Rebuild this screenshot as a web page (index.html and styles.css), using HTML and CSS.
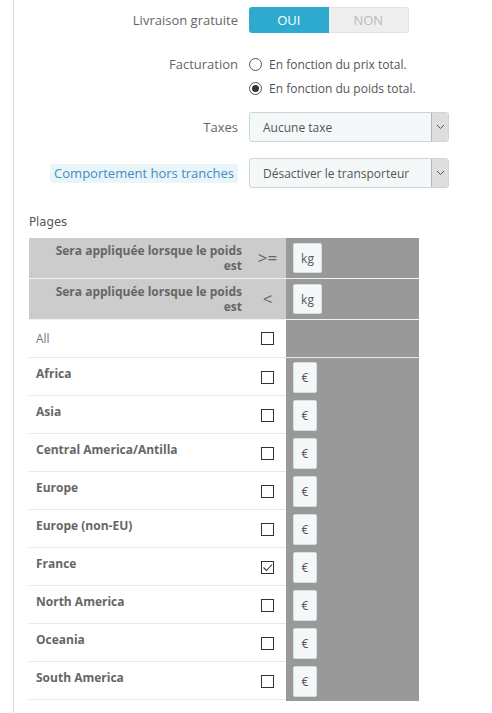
FILE: index.html
```html
<!DOCTYPE html>
<html lang="fr">
<head>
<meta charset="utf-8">
<title>Transporteur</title>
<link rel="stylesheet" href="styles.css">
</head>
<body>
<div class="panel">
  <div class="form-row row-toggle">
    <label class="form-label">Livraison gratuite</label>
    <div class="switch">
      <span class="switch-on">OUI</span>
      <span class="switch-off">NON</span>
    </div>
  </div>

  <div class="form-row row-radio">
    <label class="form-label">Facturation</label>
    <div class="radios">
      <div class="radio-line"><span class="radio"></span><span>En fonction du prix total.</span></div>
      <div class="radio-line"><span class="radio radio-checked"></span><span>En fonction du poids total.</span></div>
    </div>
  </div>

  <div class="form-row row-taxes">
    <label class="form-label">Taxes</label>
    <div class="select">
      <span class="select-text">Aucune taxe</span>
      <span class="select-arrow"><svg width="9" height="6" viewBox="0 0 9 6"><polyline points="1,1 4.5,4.5 8,1" fill="none" stroke="#555" stroke-width="1"/></svg></span>
    </div>
  </div>

  <div class="form-row row-behavior">
    <label class="form-label"><span class="label-tip">Comportement hors tranches</span></label>
    <div class="select">
      <span class="select-text">Désactiver le transporteur</span>
      <span class="select-arrow"><svg width="9" height="6" viewBox="0 0 9 6"><polyline points="1,1 4.5,4.5 8,1" fill="none" stroke="#555" stroke-width="1"/></svg></span>
    </div>
  </div>

  <h3 class="section-title">Plages</h3>

  <div class="ranges">
    <div class="trow thead">
      <div class="c-label">Sera appliquée lorsque le poids est</div>
      <div class="c-op">&gt;=</div>
      <div class="c-val"><span class="unit unit-kg">kg</span></div>
    </div>
    <div class="trow thead">
      <div class="c-label">Sera appliquée lorsque le poids est</div>
      <div class="c-op">&lt;</div>
      <div class="c-val"><span class="unit unit-kg">kg</span></div>
    </div>
    <div class="trow tall">
      <div class="c-name c-all">All</div>
      <div class="c-check"><span class="cb"></span></div>
      <div class="c-val"></div>
    </div>
    <div class="trow">
      <div class="c-name">Africa</div>
      <div class="c-check"><span class="cb"></span></div>
      <div class="c-val"><span class="unit">€</span></div>
    </div>
    <div class="trow">
      <div class="c-name">Asia</div>
      <div class="c-check"><span class="cb"></span></div>
      <div class="c-val"><span class="unit">€</span></div>
    </div>
    <div class="trow">
      <div class="c-name">Central America/Antilla</div>
      <div class="c-check"><span class="cb"></span></div>
      <div class="c-val"><span class="unit">€</span></div>
    </div>
    <div class="trow">
      <div class="c-name">Europe</div>
      <div class="c-check"><span class="cb"></span></div>
      <div class="c-val"><span class="unit">€</span></div>
    </div>
    <div class="trow">
      <div class="c-name">Europe (non-EU)</div>
      <div class="c-check"><span class="cb"></span></div>
      <div class="c-val"><span class="unit">€</span></div>
    </div>
    <div class="trow">
      <div class="c-name">France</div>
      <div class="c-check"><span class="cb cb-checked"><svg width="11" height="11" viewBox="0 0 11 11"><polyline points="1.5,5.5 4.5,8.5 10,2.5" fill="none" stroke="#333" stroke-width="1.1"/></svg></span></div>
      <div class="c-val"><span class="unit">€</span></div>
    </div>
    <div class="trow">
      <div class="c-name">North America</div>
      <div class="c-check"><span class="cb"></span></div>
      <div class="c-val"><span class="unit">€</span></div>
    </div>
    <div class="trow">
      <div class="c-name">Oceania</div>
      <div class="c-check"><span class="cb"></span></div>
      <div class="c-val"><span class="unit">€</span></div>
    </div>
    <div class="trow">
      <div class="c-name">South America</div>
      <div class="c-check"><span class="cb"></span></div>
      <div class="c-val"><span class="unit">€</span></div>
    </div>
  </div>
</div>
</body>
</html>
```

FILE: styles.css
```css
* { box-sizing: border-box; }
html, body { margin: 0; padding: 0; background: #fff; }
body {
  font-family: "Open Sans", "Liberation Sans", sans-serif;
  font-size: 12px;
  color: #555;
}
.panel {
  margin-left: 13px;
  border-left: 1px solid #dcdcdc;
  padding: 7px 0 14px 15px;
  min-height: 713px;
}
.form-row {
  display: grid;
  grid-template-columns: 209px 240px;
  column-gap: 11px;
  align-items: center;
}
.form-label {
  text-align: right;
  color: #666;
  font-size: 13px;
}
.row-radio { align-items: start; margin-top: 19px; }
.row-radio .form-label { line-height: 24px; }
.row-taxes { margin-top: 12px; }
.row-behavior { margin-top: 16px; }

.switch {
  display: flex;
  width: 160px;
  height: 26px;
  border-radius: 3px;
  overflow: hidden;
  font-size: 13px;
}
.switch-on, .switch-off {
  flex: 1;
  display: flex;
  align-items: center;
  justify-content: center;
}
.switch-on { background: #2eaacf; color: #fff; }
.switch-off { background: #eeeeee; color: #bbb; border: 1px solid #e3e3e3; border-left: none; border-radius: 0 3px 3px 0; }

.radios { display: flex; flex-direction: column; }
.radio-line {
  display: flex;
  align-items: center;
  height: 24px;
  color: #555;
  font-size: 12px;
}
.radio {
  width: 13px;
  height: 13px;
  border: 1px solid #555;
  border-radius: 50%;
  margin-right: 7px;
  display: flex;
  align-items: center;
  justify-content: center;
  background: #fff;
}
.radio-checked::after {
  content: "";
  width: 7px;
  height: 7px;
  border-radius: 50%;
  background: #333;
}

.select {
  display: flex;
  width: 200px;
  height: 30px;
  border: 1px solid #c9d6dc;
  border-radius: 3px;
  background: #f5f8f9;
  overflow: hidden;
}
.select-text {
  flex: 1;
  display: flex;
  align-items: center;
  padding-left: 13px;
  font-size: 12px;
  color: #555;
}
.select-arrow {
  width: 17px;
  display: flex;
  align-items: center;
  justify-content: center;
  background: #dedede;
  border-left: 1px solid #b5b5b5;
}
.label-tip {
  display: inline-block;
  background: #eaf5fa;
  color: #3b8ec0;
  padding: 0 4px;
  line-height: 19px;
  border-radius: 2px;
}

.section-title {
  margin: 24px 0 7px 0;
  font-family: "DejaVu Sans Condensed", "DejaVu Sans", sans-serif;
  font-stretch: condensed;
  font-weight: normal;
  font-size: 13px;
  line-height: 19px;
  color: #555;
}

.ranges { width: 390px; }
.trow {
  display: grid;
  grid-template-columns: 220px 37px 133px;
  height: 38px;
  border-bottom: 1px solid #e8e8e8;
}
.thead { height: 41px; border-bottom: 1px solid #f2f2f2; }
.c-label {
  background: #cccccc;
  color: #666;
  font-weight: bold;
  font-size: 12px;
  line-height: 15px;
  text-align: right;
  padding: 5px 7px 0 20px;
}
.c-op {
  background: #cccccc;
  color: #666;
  font-size: 17px;
  display: flex;
  align-items: center;
  justify-content: center;
  padding-bottom: 2px;
}
.c-val {
  background: #999999;
  padding: 4px 7px;
  display: flex;
  align-items: flex-start;
}
.thead .c-val { padding-top: 5px; }
.unit {
  display: flex;
  align-items: center;
  justify-content: center;
  width: 24px;
  height: 31px;
  background: #f5f8f9;
  border: 1px solid #d5dfe3;
  border-radius: 2px;
  color: #555;
  font-size: 12px;
}
.unit-kg { width: 29px; height: 30px; }
.c-name {
  padding: 7px 7px 0 7px;
  font-weight: bold;
  color: #666;
  font-size: 12px;
  line-height: 17px;
}
.c-all { font-weight: normal; color: #777; padding-top: 10px; }
.c-check {
  display: flex;
  align-items: center;
  justify-content: center;
}
.cb {
  width: 13px;
  height: 13px;
  border: 1px solid #333;
  background: #fff;
  display: flex;
  align-items: center;
  justify-content: center;
}
```
